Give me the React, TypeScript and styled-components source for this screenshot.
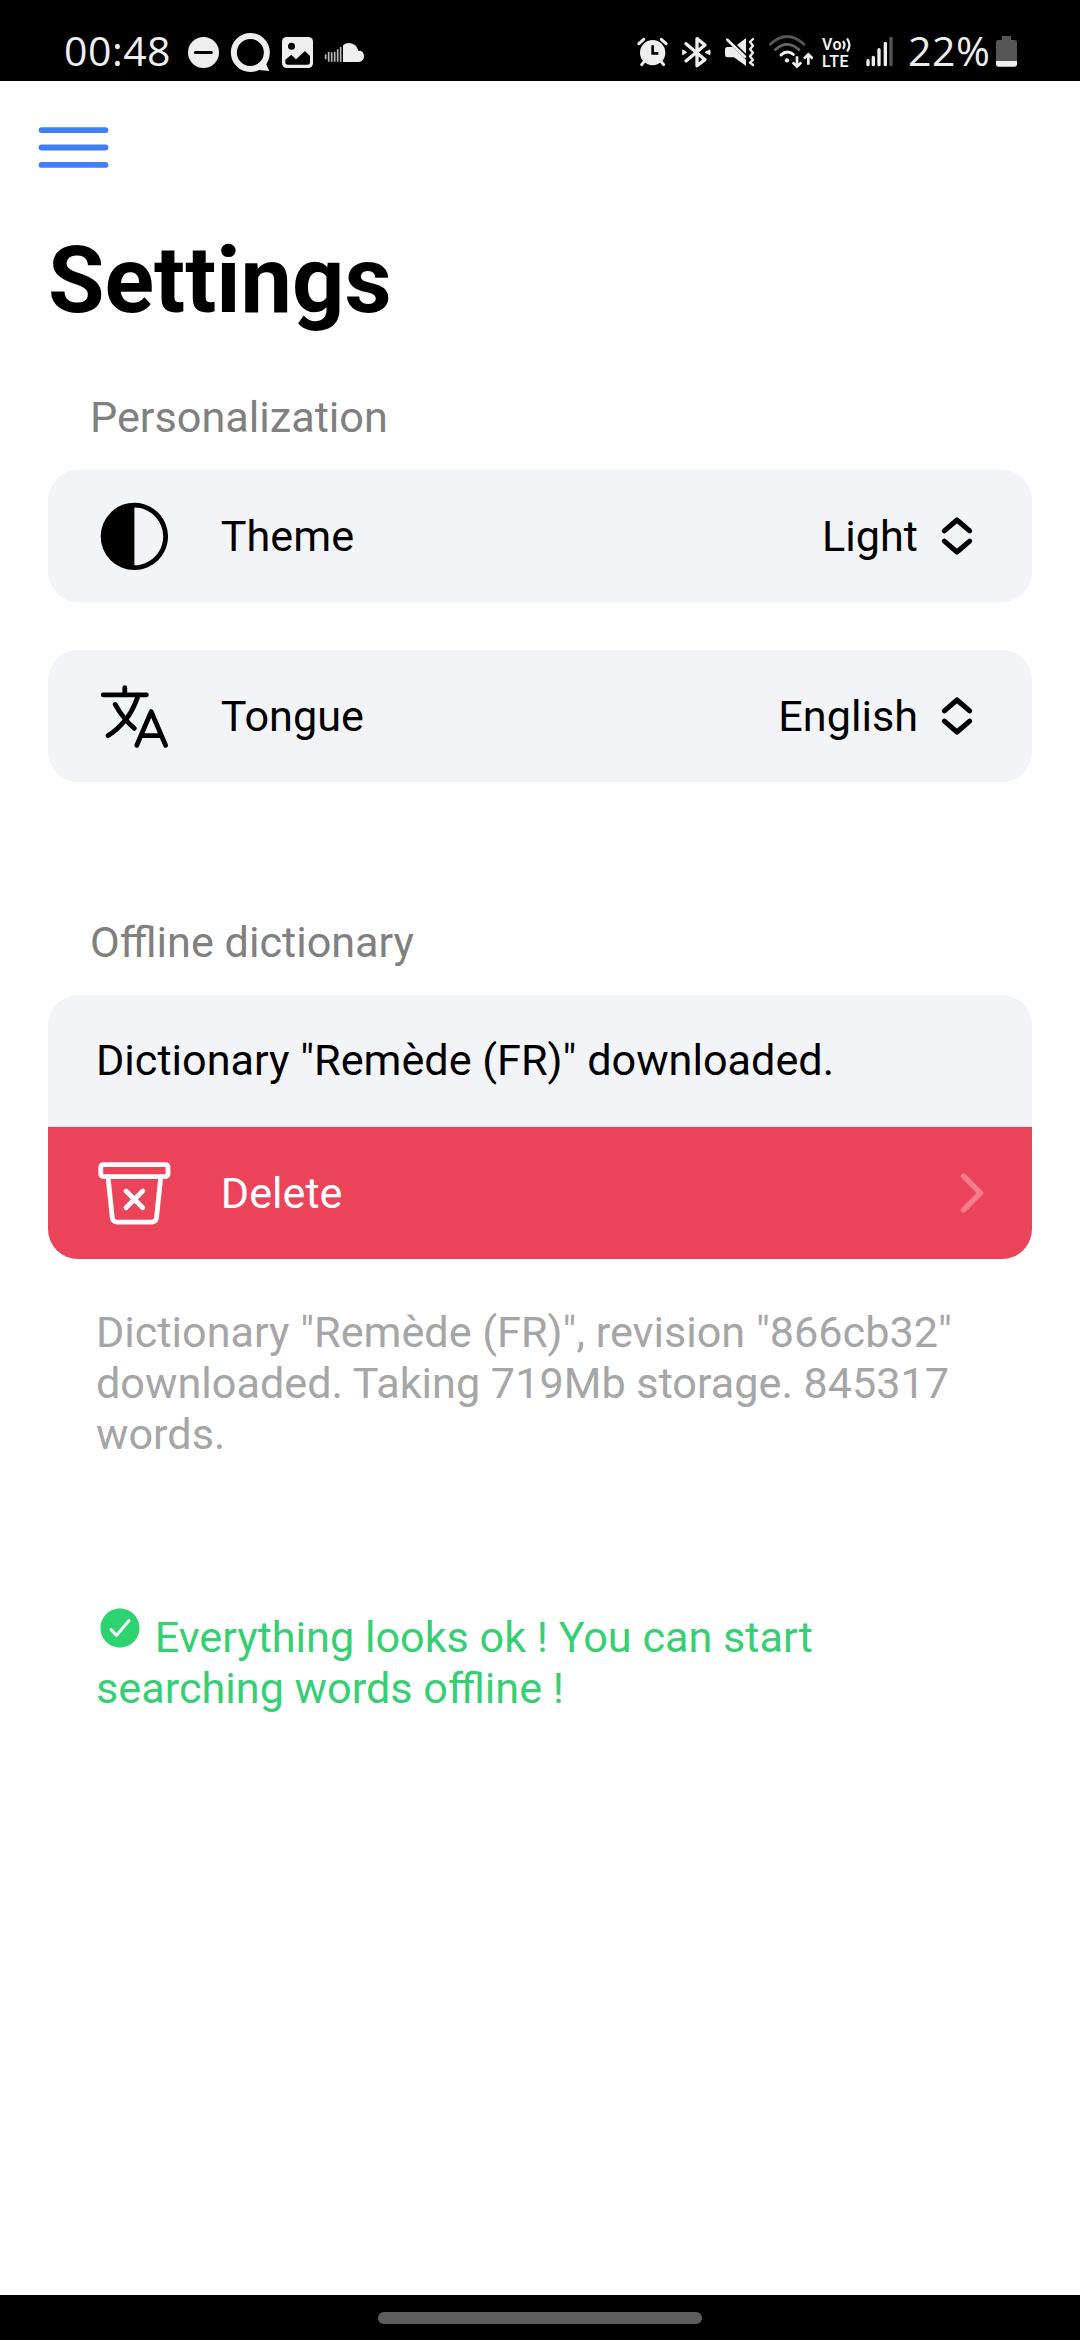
import React from "react";
import styled, { createGlobalStyle } from "styled-components";
import {
  IoCheckmarkCircle,
  IoChevronForward,
  IoContrast,
  IoLanguageOutline,
  IoMenuOutline,
  IoTrashBinOutline,
} from "react-icons/io5";

const GlobalStyle = createGlobalStyle`
  * { box-sizing: border-box; }
  body { margin: 0; background: #fff; }
`;

const Screen = styled.div`
  display: flex;
  flex-direction: column;
  width: 1080px;
  height: 2340px;
  background: #fff;
  color: #000;
  font-family: Roboto, "Noto Sans", sans-serif;
  font-size: 43.2px;
  line-height: 51px;
  overflow: hidden;
`;

const StatusBar = styled.header`
  display: flex;
  justify-content: space-between;
  flex: none;
  height: 81px;
  padding: 32px 62px 0 64px;
  background: #000;
  color: #eee;
`;

const StatusGroup = styled.div`
  display: flex;
  height: 41px;
`;

const StatusText = styled.span<{ $width: number }>`
  width: ${(p) => p.$width}px;
  font-family: "Open Sans", "Noto Sans", sans-serif;
  font-size: 41px;
  line-height: 37px;
  letter-spacing: 0.5px;
  white-space: nowrap;
`;

const Glyph = styled.svg<{ $gap: number }>`
  display: block;
  flex: none;
  height: 41px;
  margin-left: ${(p) => p.$gap}px;
`;

const VoLte = styled.div`
  display: flex;
  flex-direction: column;
  width: 31px;
  margin: 0 13px 0 9px;
  padding-top: 4px;
  font-weight: 600;
  font-size: 16px;
  line-height: 17px;
  letter-spacing: 0.5px;
`;

const VoLine = styled.div`
  display: flex;
  align-items: center;
  height: 17px;
`;

const Waves = styled.svg`
  display: block;
  flex: none;
`;

const BatteryLevel = styled.div`
  display: flex;
  margin-left: 14px;
`;

const Toolbar = styled.nav`
  display: flex;
  flex: none;
  align-items: center;
  height: 132px;
  padding-left: 27px;
  color: #3f80f4;
`;

const Main = styled.main`
  display: flex;
  flex: 1;
  flex-direction: column;
  padding: 14px 48px 0;
`;

const Title = styled.h1`
  margin: 0;
  font-size: 91.8px;
  font-weight: 700;
  line-height: 108px;
`;

const SectionLabel = styled.h2<{ $top: number }>`
  margin: ${(p) => p.$top}px 0 27px;
  padding-left: 42px;
  color: #808080;
  font-size: 43.2px;
  font-weight: 400;
  line-height: 51px;
`;

const CardStack = styled.div`
  display: flex;
  flex-direction: column;
  gap: 48px;
`;

const Card = styled.section`
  display: flex;
  flex-direction: column;
  border-radius: 30px;
  background: #f3f4f8;
  overflow: hidden;
`;

const Row = styled.div<{ $danger?: boolean; $lift?: number }>`
  display: flex;
  align-items: center;
  height: 132px;
  padding: 0 48px ${(p) => p.$lift ?? 0}px;
  background: ${(p) => (p.$danger ? "#eb445a" : "transparent")};
  color: ${(p) => (p.$danger ? "#fff" : "#000")};
`;

const RowIcon = styled.span`
  display: flex;
  margin-right: 48px;
`;

const RowLabel = styled.span`
  flex: 1;
`;

const RowValue = styled.span`
  display: flex;
  align-items: center;
  gap: 12px;
`;

const Disclosure = styled.span`
  display: flex;
  margin-right: -18px;
  color: #f77c8c;
`;

const ThemeIcon = styled(IoContrast)`
  transform: scaleX(-1);
`;

const Note = styled.p<{ $top: number; $color: string }>`
  margin: ${(p) => p.$top}px 0 0;
  padding: 0 48px;
  color: ${(p) => p.$color};
`;

const OkIcon = styled(IoCheckmarkCircle)`
  color: #2dd36f;
`;

const NavBar = styled.footer`
  display: flex;
  flex: none;
  justify-content: center;
  height: 45px;
  padding-top: 17px;
  background: #000;
`;

const NavHandle = styled.div`
  width: 324px;
  height: 12px;
  border-radius: 6px;
  background: #5e5e5e;
`;

type GlyphProps = { x: number; w: number; gap: number; children: React.ReactNode };

const StatusGlyph = ({ x, w, gap, children }: GlyphProps) => (
  <Glyph $gap={gap} width={w / 3} viewBox={`${x} 36 ${w} 123`} fill="none">
    {children}
  </Glyph>
);

const ChevronExpand = () => (
  <svg
    width="54"
    height="54"
    viewBox="0 0 512 512"
    fill="none"
    stroke="currentColor"
    strokeWidth="48"
    strokeLinecap="round"
    strokeLinejoin="round"
  >
    <path d="M136 208L256 104L376 208M136 304L256 408L376 304" />
  </svg>
);

const LeftStatus = () => (
  <StatusGroup>
    <StatusText $width={105}>00:48</StatusText>
    <StatusGlyph x={441} w={99} gap={18}>
      <circle cx="490.500" cy="97.500" r="46.500" fill="#eee" />
      <path d="M466 97.500H514" stroke="#000" strokeWidth="9" strokeLinecap="round" />
    </StatusGlyph>
    <StatusGlyph x={570} w={123} gap={10}>
      <circle cx="631" cy="97.500" r="49.500" stroke="#eee" strokeWidth="18" />
      <path d="M650 149L688 153L679 134L686 112L664 128Z" fill="#eee" />
    </StatusGlyph>
    <StatusGlyph x={723} w={99} gap={10}>
      <rect x="726" y="51" width="93" height="93" rx="14" fill="#eee" />
      <circle cx="754.500" cy="79" r="10.500" fill="#000" />
      <path
        d="M736 119L754 104L768 118L795 93L810 108V126Q810 134 802 134H744Q736 134 736 127Z"
        fill="#000"
      />
    </StatusGlyph>
    <StatusGlyph x={852} w={123} gap={10}>
      <path
        d="M857 103V118M866 96V125M875 97V125M884 95V125M893 88V125M902 80V125"
        stroke="#bbb"
        strokeWidth="5"
      />
      <path
        d="M909 76Q917 69 926 69C942 69 953 80 955 93C965 90 972 98 972 109C972 119 965 126 956 126H909Z"
        fill="#eee"
      />
    </StatusGlyph>
  </StatusGroup>
);

const RightStatus = () => (
  <StatusGroup>
    <StatusGlyph x={48} w={93} gap={0}>
      <circle cx="95" cy="98" r="38" fill="#eee" />
      <path d="M54 71L68 58M121 58L135 71" stroke="#eee" strokeWidth="9" strokeLinecap="round" />
      <path d="M70 124L62 134M120 124L128 134" stroke="#eee" strokeWidth="9" strokeLinecap="round" />
      <path d="M95 76V100H112" stroke="#000" strokeWidth="8" />
    </StatusGlyph>
    <StatusGlyph x={183} w={87} gap={14}>
      <path
        d="M195 71L252 119L228 137V56L252 75L195 123"
        stroke="#eee"
        strokeWidth="10"
        strokeLinejoin="round"
        strokeLinecap="round"
      />
      <path d="M185 90L197 97L185 104ZM267 90L252 97L267 104Z" fill="#eee" stroke="#eee" strokeWidth="3" />
    </StatusGlyph>
    <StatusGlyph x={309} w={96} gap={13}>
      <path d="M312 88Q312 81 319 81H336L375 119V138L339 112H319Q312 112 312 105Z" fill="#eee" />
      <path d="M375 54V101L348 75Z" fill="#eee" />
      <path d="M319 59L372 110" stroke="#eee" strokeWidth="8" strokeLinecap="round" />
      <path
        d="M396 57L387 66L396 77L387 88L396 98L387 109L396 120L387 128L396 135"
        stroke="#eee"
        strokeWidth="7"
        strokeLinejoin="round"
        strokeLinecap="round"
      />
    </StatusGlyph>
    <StatusGlyph x={441} w={135} gap={12}>
      <path d="M448 73Q498 26 549 73" stroke="#555" strokeWidth="8" strokeLinecap="round" />
      <path d="M463 89Q498 57 534 89" stroke="#666" strokeWidth="8" strokeLinecap="round" />
      <path d="M480 105Q498 88 517 103" stroke="#eee" strokeWidth="9" strokeLinecap="round" />
      <circle cx="498" cy="121" r="6.500" fill="#eee" />
      <path
        d="M528 109V139M515 127L528 140L541 127M562 134V104M549 116L562 103L575 116"
        stroke="#eee"
        strokeWidth="8"
      />
    </StatusGlyph>
    <VoLte>
      <VoLine>
        Vo
        <Waves width="10" height="16" viewBox="0 0 10 16" fill="none" stroke="#eee" strokeWidth="2.200">
          <path d="M1 4Q4 8 1 12M5 1.500Q10 8 5 14.500" />
        </Waves>
      </VoLine>
      <VoLine>LTE</VoLine>
    </VoLte>
    <StatusGlyph x={732} w={84} gap={0}>
      <path d="M738 122V134M754 112V134M771 89V134M790 70V134" stroke="#eee" strokeWidth="10" strokeLinecap="round" />
      <path d="M807 55V134" stroke="#555" strokeWidth="10" strokeLinecap="round" />
    </StatusGlyph>
    <BatteryLevel>
      <StatusText $width={81}>22%</StatusText>
      <StatusGlyph x={1122} w={69} gap={6}>
        <path d="M1143 48H1170V60H1181Q1188 60 1188 67V123H1125V67Q1125 60 1132 60H1143Z" fill="#555" />
        <path d="M1125 123H1188V132Q1188 140 1180 140H1133Q1125 140 1125 132Z" fill="#eee" />
      </StatusGlyph>
    </BatteryLevel>
  </StatusGroup>
);

const SelectRow = ({ icon, label, value }: { icon: React.ReactNode; label: string; value: string }) => (
  <Card>
    <Row>
      <RowIcon>{icon}</RowIcon>
      <RowLabel>{label}</RowLabel>
      <RowValue>
        {value}
        <ChevronExpand />
      </RowValue>
    </Row>
  </Card>
);

export default function App() {
  return (
    <Screen>
      <GlobalStyle />
      <StatusBar>
        <LeftStatus />
        <RightStatus />
      </StatusBar>
      <Toolbar>
        <IoMenuOutline size={93} />
      </Toolbar>
      <Main>
        <Title>Settings</Title>
        <SectionLabel $top={57}>Personalization</SectionLabel>
        <CardStack>
          <SelectRow icon={<ThemeIcon size={76.8} />} label="Theme" value="Light" />
          <SelectRow icon={<IoLanguageOutline size={76.8} />} label="Tongue" value="English" />
        </CardStack>
        <SectionLabel $top={135}>Offline dictionary</SectionLabel>
        <Card>
          <Row $lift={2}>Dictionary "Remède (FR)" downloaded.</Row>
          <Row $danger>
            <RowIcon>
              <IoTrashBinOutline size={76.8} />
            </RowIcon>
            <RowLabel>Delete</RowLabel>
            <Disclosure>
              <IoChevronForward size={60} />
            </Disclosure>
          </Row>
        </Card>
        <Note $top={48} $color="#a6a6a6">
          Dictionary "Remède (FR)", revision "866cb32" downloaded. Taking 719Mb storage. 845317 words.
        </Note>
        <Note $top={144} $color="#36cf74">
          <OkIcon size={48} /> Everything looks ok ! You can start searching words offline !
        </Note>
      </Main>
      <NavBar>
        <NavHandle />
      </NavBar>
    </Screen>
  );
}
